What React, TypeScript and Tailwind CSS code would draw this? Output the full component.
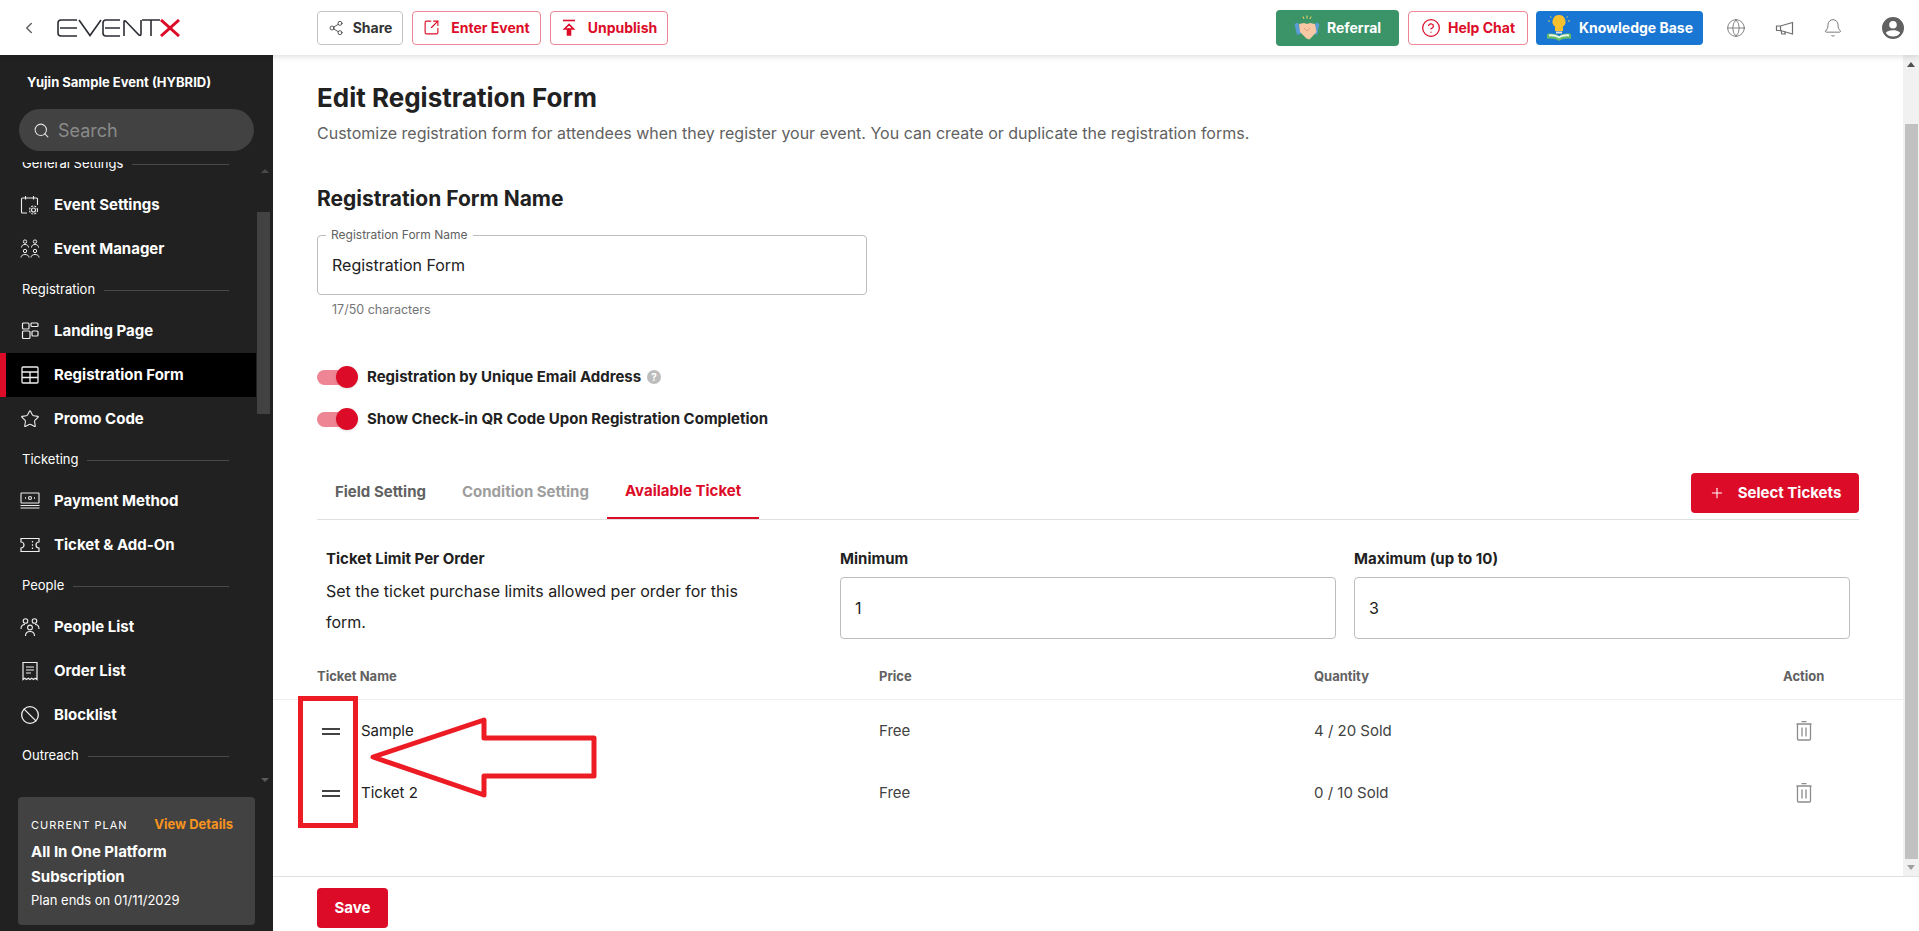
import React from 'react';
import {
  Ban,
  Bell,
  ChevronLeft,
  CircleHelp,
  Globe,
  Plus,
  Search,
  Share2,
  SquareArrowOutUpRight,
  Star,
} from 'lucide-react';

type IconProps = { className?: string };

const CalendarGear = ({ className }: IconProps) => (
  <svg viewBox="0 0 20 20" fill="none" stroke="currentColor" strokeWidth="1.1" className={className}>
    <path d="M7 18H2.5a1 1 0 0 1-1-1V4a1 1 0 0 1 1-1h14a1 1 0 0 1 1 1v6" />
    <path d="M5.5 1v3.5M13.5 1v3.5" />
    <circle cx="13.5" cy="15" r="2" />
    <circle cx="13.5" cy="15" r="4" strokeDasharray="2 1.2" />
  </svg>
);

const PeopleGrid = ({ className }: IconProps) => (
  <svg viewBox="0 0 20 20" fill="none" stroke="currentColor" strokeWidth="1" className={className}>
    <circle cx="5" cy="2.6" r="1.7" />
    <circle cx="15" cy="2.6" r="1.7" />
    <path d="M1.5 8.5c0-2 1.5-3 3.5-3s3.5 1 3.5 3M11.5 8.5c0-2 1.500-3 3.500-3s3.500 1 3.500 3" />
    <circle cx="5" cy="12" r="1.7" />
    <circle cx="15" cy="12" r="1.7" />
    <path d="M1 18.500c0-2 1.800-3 4-3s4 1 4 3M11 18.500c0-2 1.800-3 4-3s4 1 4 3" />
  </svg>
);

const LandingIcon = ({ className }: IconProps) => (
  <svg viewBox="0 0 20 20" fill="none" stroke="currentColor" strokeWidth="1.2" className={className}>
    <rect x="2.500" y="2" width="6.500" height="6" rx="1" />
    <rect x="11" y="2" width="7" height="3.500" rx="1" />
    <rect x="2.500" y="10" width="7.500" height="7.500" rx="1" />
    <rect x="12" y="10" width="6" height="5" rx="1" />
  </svg>
);

const TableIcon = ({ className }: IconProps) => (
  <svg viewBox="0 0 20 20" fill="none" stroke="currentColor" strokeWidth="1.3" className={className}>
    <rect x="2" y="2" width="16" height="16" rx="1" />
    <path d="M2 7h16M2 12.500h16M10 7v11" />
  </svg>
);

const MoneyIcon = ({ className }: IconProps) => (
  <svg viewBox="0 0 20 20" fill="none" stroke="currentColor" strokeWidth="1.1" className={className}>
    <rect x="1" y="2" width="18" height="10" rx="0.500" />
    <circle cx="10" cy="7" r="1.500" />
    <path d="M5 7h1M14 7h1" strokeWidth="1.500" />
    <path d="M0.500 14.500h19M0.500 17h19" />
  </svg>
);

const TicketIcon = ({ className }: IconProps) => (
  <svg viewBox="0 0 20 20" fill="none" stroke="currentColor" strokeWidth="1.2" className={className}>
    <path d="M1 3.500h18v3.500a3 3 0 0 0 0 6v3.500H1V13a3 3 0 0 0 0-6z" />
    <path d="M12.500 6v1.500M12.500 9.200v1.600M12.500 12.500V14" />
  </svg>
);

const GroupIcon = ({ className }: IconProps) => (
  <svg viewBox="0 0 20 20" fill="none" stroke="currentColor" strokeWidth="1.100" className={className}>
    <circle cx="5.500" cy="4" r="2.300" />
    <circle cx="14.500" cy="4" r="2.300" />
    <circle cx="10" cy="10.500" r="2.400" />
    <path d="M1 12c0-3 1.800-4.500 4-4.500M19 12c0-3-1.800-4.500-4-4.500M5.500 19c0-3 2-4.500 4.500-4.500s4.500 1.500 4.500 4.500" />
  </svg>
);

const ReceiptIcon = ({ className }: IconProps) => (
  <svg viewBox="0 0 20 20" fill="none" stroke="currentColor" strokeWidth="1.200" className={className}>
    <path d="M3 1.500h14v17l-1.750-1.200-1.750 1.200-1.750-1.200-1.750 1.200-1.750-1.200-1.750 1.200-1.750-1.200L3 18.500z" />
    <path d="M6 6h8M6 9h8M6 12h5" />
  </svg>
);

const DragHandle = () => (
  <svg viewBox="0 0 18 7" className="h-[7px] w-[18px]" fill="#424242">
    <rect x="0" y="0" width="18" height="2" />
    <rect x="0" y="5" width="18" height="2" />
  </svg>
);

const TrashIcon = () => (
  <svg viewBox="0 0 16 20" fill="none" stroke="#8c8c8c" strokeWidth="1.300" className="h-[20px] w-[16px]">
    <path d="M0.500 3h15M5.500 0.700h5" />
    <path d="M1.500 3v15a1 1 0 0 0 1 1h11a1 1 0 0 0 1-1V3" />
    <path d="M6 6.500v9M10 6.500v9" />
  </svg>
);

const Logo = () => (
  <svg viewBox="0 0 123 18" className="h-[18px] w-[123px]" fill="none">
    <g stroke="#2b2e33" strokeWidth="1.600">
      <path d="M20 1H4Q1 1 1 4V14Q1 17 4 17H20M3 9H20" />
      <path d="M22 1L33 16.500L44 1" />
      <path d="M63 1H49Q46 1 46 4V14Q46 17 49 17H63M48 9H63" />
      <path d="M67 17V3Q67 1 69 2.500L82 16Q84 17 84 15V1" />
      <path d="M85 1H103M94 1V17" />
    </g>
    <path d="M104 1L122 17M122 1L104 17" stroke="#dc0c28" strokeWidth="3" />
  </svg>
);

const Handshake = () => (
  <svg viewBox="0 0 26 26" className="h-[26px] w-[26px]">
    <path d="M9 1.500l1 2.500M13 0.500v3M17 1.500l-1 2.500" stroke="#f4d35e" strokeWidth="1" fill="none" />
    <path d="M0.500 9l3.500-1.500 3 11-4 1.500z" fill="#5b9bd5" />
    <path d="M25.500 9l-3.500-1.500-3 11 4 1.500z" fill="#5b9bd5" />
    <path d="M5 9l5-1 3 1 3-1 5 1 1.500 8-7 7.500-3 -1-6.500-6.500z" fill="#f8c8a4" />
    <path d="M10 13l3 3 3-3" stroke="#d99a73" strokeWidth="0.800" fill="none" />
  </svg>
);

const BulbBook = () => (
  <svg viewBox="0 0 26 28" className="h-[28px] w-[26px]">
    <path d="M13 1a6.500 6.500 0 0 0-4 11.600V17h8v-4.400A6.500 6.500 0 0 0 13 1z" fill="#fbc02d" />
    <rect x="10" y="17.500" width="6" height="2" fill="#e0e0e0" />
    <path d="M1 20c4-1 8-0.500 12 2 4-2.500 8-3 12-2v5c-4-1-8-0.500-12 2-4-2.500-8-3-12-2z" fill="#66bb6a" />
    <path d="M3 20.500c3.500-0.500 7 0 10 2 3-2 6.500-2.500 10-2v2c-3.500-0.500-7 0-10 2-3-2-6.500-2.500-10-2z" fill="#e8f5e9" />
    <path d="M2 7H4M22 7h2M4 2.500l1.500 1M22 2.500l-1.500 1" stroke="#f4d35e" strokeWidth="0.900" />
  </svg>
);

const Megaphone = () => (
  <svg viewBox="0 0 20 20" className="h-[20px] w-[20px]" fill="none" stroke="#6e6e6e" strokeWidth="1.200">
    <path d="M1.500 8v4.500h4L17.500 16V4.500L5.500 8z" />
    <path d="M5.500 8v4.500M6 12.500l0.800 3.500h3.500l-0.700-2.600" />
  </svg>
);

const Avatar = () => (
  <svg viewBox="0 0 24 24" className="h-[24px] w-[24px]" fill="#616161">
    <path d="M12 1a11 11 0 1 0 0 22 11 11 0 0 0 0-22zm0 4a3.800 3.800 0 1 1 0 7.600A3.800 3.800 0 0 1 12 5zm0 15.500c-3 0-5.600-1.400-7.100-3.600C5.700 15 9.600 14.200 12 14.200s6.300 0.800 7.100 2.700c-1.500 2.200-4.100 3.600-7.100 3.600z" />
  </svg>
);

const UnpublishIcon = () => (
  <svg viewBox="0 0 16 18" className="h-[18px] w-[16px]" fill="none" stroke="#dc0c28" strokeWidth="1.600">
    <path d="M2 1.500h12" />
    <path d="M8 16.500V9M8 5.500L3.500 10h3V16h3V10h3z" />
  </svg>
);

const SectionLabel = ({ label }: { label: string }) => (
  <div className="flex h-[38px] shrink-0 items-center gap-[9px] pl-[22px] pr-[27px] text-[13px] text-white">
    <span>{label}</span>
    <div className="h-px flex-1 bg-[#4a4a4a]" />
  </div>
);

const NavItem = ({
  icon: Icon,
  label,
  active,
}: {
  icon: React.ComponentType<IconProps>;
  label: string;
  active?: boolean;
}) => (
  <div
    className={
      active
        ? 'flex h-[44px] shrink-0 items-center gap-[14px] border-l-[6px] border-[#dc0c28] bg-black pl-[14px] text-[15px] font-bold text-white'
        : 'flex h-[44px] shrink-0 items-center gap-[14px] pl-[20px] text-[15px] font-bold text-white'
    }
  >
    <Icon className="h-[20px] w-[20px] shrink-0 text-[#eeeeee]" />
    <span>{label}</span>
  </div>
);

const StarIcon = ({ className }: IconProps) => <Star className={className} strokeWidth={1.3} />;
const BanIcon = ({ className }: IconProps) => <Ban className={className} strokeWidth={1.6} />;

const Sidebar = () => (
  <aside className="flex h-full w-[273px] shrink-0 flex-col bg-[#212121]">
    <div className="pl-[27px] pt-[17px] text-[13px] font-bold leading-[20px] text-white">Yujin Sample Event (HYBRID)</div>
    <div className="ml-[19px] mt-[17px] flex h-[42px] w-[235px] shrink-0 items-center gap-[8px] rounded-full bg-[#424242] pl-[14px] text-[18px] text-[#8a8a8a]">
      <Search className="h-[17px] w-[17px] text-[#e0e0e0]" strokeWidth={1.5} />
      <span>Search</span>
    </div>
    <div className="mt-[11px] flex h-[625px] shrink-0 overflow-hidden">
      <div className="-mt-[17px] flex w-[256px] shrink-0 flex-col">
        <SectionLabel label="General Settings" />
        <NavItem icon={CalendarGear} label="Event Settings" />
        <NavItem icon={PeopleGrid} label="Event Manager" />
        <SectionLabel label="Registration" />
        <NavItem icon={LandingIcon} label="Landing Page" />
        <NavItem icon={TableIcon} label="Registration Form" active />
        <NavItem icon={StarIcon} label="Promo Code" />
        <SectionLabel label="Ticketing" />
        <NavItem icon={MoneyIcon} label="Payment Method" />
        <NavItem icon={TicketIcon} label="Ticket & Add-On" />
        <SectionLabel label="People" />
        <NavItem icon={GroupIcon} label="People List" />
        <NavItem icon={ReceiptIcon} label="Order List" />
        <NavItem icon={BanIcon} label="Blocklist" />
        <SectionLabel label="Outreach" />
      </div>
      <div className="flex w-[17px] flex-col items-center pt-[7px]">
        <div className="h-0 w-0 border-x-[4px] border-b-[4px] border-x-transparent border-b-[#4a4a4a]" />
        <div className="ml-[-2px] mt-[39px] h-[202px] w-[13px] bg-[#424242]" />
        <div className="mt-auto mb-[5px] h-0 w-0 border-x-[4px] border-t-[4px] border-x-transparent border-t-[#5a5a5a]" />
      </div>
    </div>
    <div className="ml-[18px] mt-[10px] h-[128px] w-[237px] shrink-0 rounded bg-[#424242] px-[13px] pt-[17px] text-white">
      <div className="flex h-[22px] items-center justify-between pr-[9px]">
        <span className="text-[11px] tracking-[1px]">CURRENT PLAN</span>
        <span className="text-[13px] font-bold text-[#f7931e]">View Details</span>
      </div>
      <div className="mt-[3px] text-[15px] font-bold leading-[25px]">
        All In One Platform
        <br />
        Subscription
      </div>
      <div className="text-[13px] leading-[22px]">Plan ends on 01/11/2029</div>
    </div>
  </aside>
);

const Toggle = () => (
  <div className="relative h-[22px] w-[41px] shrink-0">
    <div className="absolute left-0 top-[3.5px] h-[15px] w-[34px] rounded-full bg-[#ee8594]" />
    <div className="absolute right-0 top-0 h-[22px] w-[22px] rounded-full bg-[#dc0c28] shadow" />
  </div>
);

const Header = () => (
  <header className="relative z-10 flex h-[55px] shrink-0 items-center bg-white shadow-[0_2px_6px_rgba(0,0,0,0.12)]">
    <ChevronLeft className="ml-[20px] h-[18px] w-[18px] text-[#616161]" />
    <div className="ml-[19px]">
      <Logo />
    </div>
    <div className="ml-[137px] flex items-center gap-[9px] text-[14px] font-bold">
      <button className="flex h-[34px] w-[86px] items-center justify-center gap-[9px] rounded border border-[#c4c4c4] text-[#333333]">
        <Share2 className="h-[16px] w-[16px]" strokeWidth={1.2} />
        Share
      </button>
      <button className="flex h-[34px] w-[129px] items-center justify-center gap-[11px] rounded border border-[#ee8594] text-[#dc0c28]">
        <SquareArrowOutUpRight className="h-[17px] w-[17px]" strokeWidth={1.6} />
        Enter Event
      </button>
      <button className="flex h-[34px] w-[118px] items-center justify-center gap-[11px] rounded border border-[#ee8594] text-[#dc0c28]">
        <UnpublishIcon />
        Unpublish
      </button>
    </div>
    <div className="ml-auto flex items-center text-[14px] font-bold">
      <button className="flex h-[36px] w-[123px] items-center justify-center gap-[7px] rounded bg-[#3a9468] text-white">
        <Handshake />
        Referral
      </button>
      <button className="ml-[9px] flex h-[34px] w-[120px] items-center justify-center gap-[7px] rounded border border-[#ee8594] text-[#dc0c28]">
        <CircleHelp className="h-[20px] w-[20px]" strokeWidth={1.5} />
        Help Chat
      </button>
      <button className="ml-[8px] flex h-[34px] w-[167px] items-center justify-center gap-[7px] rounded bg-[#1976d2] text-white">
        <BulbBook />
        Knowledge Base
      </button>
      <Globe className="ml-[23px] h-[20px] w-[20px] text-[#6e6e6e]" strokeWidth={1} />
      <div className="ml-[29px]">
        <Megaphone />
      </div>
      <Bell className="ml-[28px] h-[20px] w-[20px] text-[#6e6e6e]" strokeWidth={1.1} />
      <div className="ml-[38px] mr-[14px]">
        <Avatar />
      </div>
    </div>
  </header>
);

const tickets = [
  { name: 'Sample', price: 'Free', quantity: '4 / 20 Sold' },
  { name: 'Ticket 2', price: 'Free', quantity: '0 / 10 Sold' },
];

const Content = () => (
  <div className="min-w-0 flex-1 overflow-hidden px-[44px] pt-[26px]">
    <h1 className="text-[26px] font-bold leading-[34px] text-[#212121]">Edit Registration Form</h1>
    <p className="mt-[6px] whitespace-nowrap text-[16px] leading-[24px] text-[#616161]">
      Customize registration form for attendees when they register your event. You can create or duplicate the registration forms.
    </p>
    <h2 className="mt-[40px] text-[21px] font-bold leading-[28px] text-[#212121]">Registration Form Name</h2>
    <div className="relative mt-[22px] flex h-[60px] w-[550px] items-center rounded border border-[#bdbdbd] pl-[14px] text-[16px] text-[#212121]">
      <span className="absolute -top-[9px] left-[8px] bg-white px-[5px] text-[12px] leading-[16px] text-[#616161]">Registration Form Name</span>
      Registration Form
    </div>
    <div className="ml-[15px] mt-[6px] text-[12.5px] leading-[18px] text-[#757575]">17/50 characters</div>

    <div className="mt-[41px] flex h-[34px] items-center gap-[9px] text-[15px] font-bold text-[#212121]">
      <Toggle />
      <span>Registration by Unique Email Address</span>
      <span className="-ml-[3px] flex h-[14px] w-[14px] items-center justify-center rounded-full bg-[#bdbdbd] text-[10px] text-white">?</span>
    </div>
    <div className="mt-[8px] flex h-[34px] items-center gap-[9px] text-[15px] font-bold text-[#212121]">
      <Toggle />
      <span>Show Check-in QR Code Upon Registration Completion</span>
    </div>

    <div className="mt-[30px] flex h-[54px] border-b border-[#e0e0e0]">
      <div className="flex h-[53px] items-center text-[15px] font-bold">
        <div className="flex h-full items-center px-[18px] text-[#616161]">Field Setting</div>
        <div className="flex h-full items-center px-[18px] text-[#9e9e9e]">Condition Setting</div>
        <div className="flex h-full items-center border-b-2 border-[#dc0c28] px-[18px] text-[#dc0c28]">Available Ticket</div>
      </div>
      <button className="ml-auto mt-[7px] flex h-[40px] w-[168px] items-center justify-center gap-[13px] rounded bg-[#dc0c28] text-[15px] font-bold text-white">
        <Plus className="h-[16px] w-[16px]" strokeWidth={1.6} />
        Select Tickets
      </button>
    </div>

    <div className="mt-[28px] grid grid-cols-[1fr_496px_496px] gap-x-[18px] px-[9px]">
      <div>
        <div className="text-[15px] font-bold leading-[22px] text-[#212121]">Ticket Limit Per Order</div>
        <div className="mt-[6px] whitespace-nowrap text-[16px] leading-[31px] text-[#212121]">
          Set the ticket purchase limits allowed per order for this
          <br />
          form.
        </div>
      </div>
      <div>
        <div className="text-[15px] font-bold leading-[22px] text-[#212121]">Minimum</div>
        <div className="mt-[7px] flex h-[62px] items-center rounded border border-[#bdbdbd] pl-[14px] text-[16px] text-[#212121]">1</div>
      </div>
      <div>
        <div className="text-[15px] font-bold leading-[22px] text-[#212121]">Maximum (up to 10)</div>
        <div className="mt-[7px] flex h-[62px] items-center rounded border border-[#bdbdbd] pl-[14px] text-[16px] text-[#212121]">3</div>
      </div>
    </div>

    <div className="-mx-[44px] mt-[15px]">
      <div className="grid h-[46px] grid-cols-[562px_435px_469px_1fr] items-center border-b border-[#eeeeee] px-[44px] text-[13px] font-bold text-[#616161]">
        <div>Ticket Name</div>
        <div>Price</div>
        <div>Quantity</div>
        <div>Action</div>
      </div>
      {tickets.map((t) => (
        <div key={t.name} className="grid h-[62px] grid-cols-[562px_435px_469px_1fr] items-center px-[44px] text-[15px] text-[#212121]">
          <div className="flex items-center gap-[21px] pl-[5px]">
            <DragHandle />
            {t.name}
          </div>
          <div className="text-[#424242]">{t.price}</div>
          <div className="text-[#424242]">{t.quantity}</div>
          <div className="pl-[13px]">
            <TrashIcon />
          </div>
        </div>
      ))}
    </div>
  </div>
);

const Annotation = () => (
  <>
    <div className="absolute left-[25px] top-[641px] h-[132px] w-[60px] border-[5px] border-[#ed1c24]" />
    <svg className="absolute left-[85px] top-[650px] h-[130px] w-[250px]" viewBox="0 0 250 130" fill="none">
      <path d="M15 52L126 15V33H236V71H126V90z" stroke="#ed1c24" strokeWidth="5" strokeLinejoin="round" />
    </svg>
  </>
);

export default function App() {
  return (
    <div className="flex h-[931px] w-full flex-col overflow-hidden bg-white [font-family:Inter,sans-serif]">
      <Header />
      <div className="flex min-h-0 flex-1">
        <Sidebar />
        <main className="relative flex min-w-0 flex-1 flex-col">
          <div className="flex min-h-0 flex-1">
            <Content />
            <div className="flex w-[16px] shrink-0 flex-col bg-[#f1f1f1]">
              <div className="mx-auto mt-[7px] h-0 w-0 border-x-[4px] border-b-[5px] border-x-transparent border-b-[#505050]" />
              <div className="ml-[2px] mt-[57px] h-[735px] w-[13px] bg-[#c1c1c1]" />
              <div className="mx-auto mt-[6px] h-0 w-0 border-x-[4px] border-t-[5px] border-x-transparent border-t-[#a0a0a0]" />
            </div>
          </div>
          <div className="h-[55px] shrink-0 border-t border-[#e0e0e0] pl-[44px] pt-[11px]">
            <button className="h-[40px] w-[71px] rounded bg-[#dc0c28] text-[15px] font-bold text-white">Save</button>
          </div>
          <Annotation />
        </main>
      </div>
    </div>
  );
}
